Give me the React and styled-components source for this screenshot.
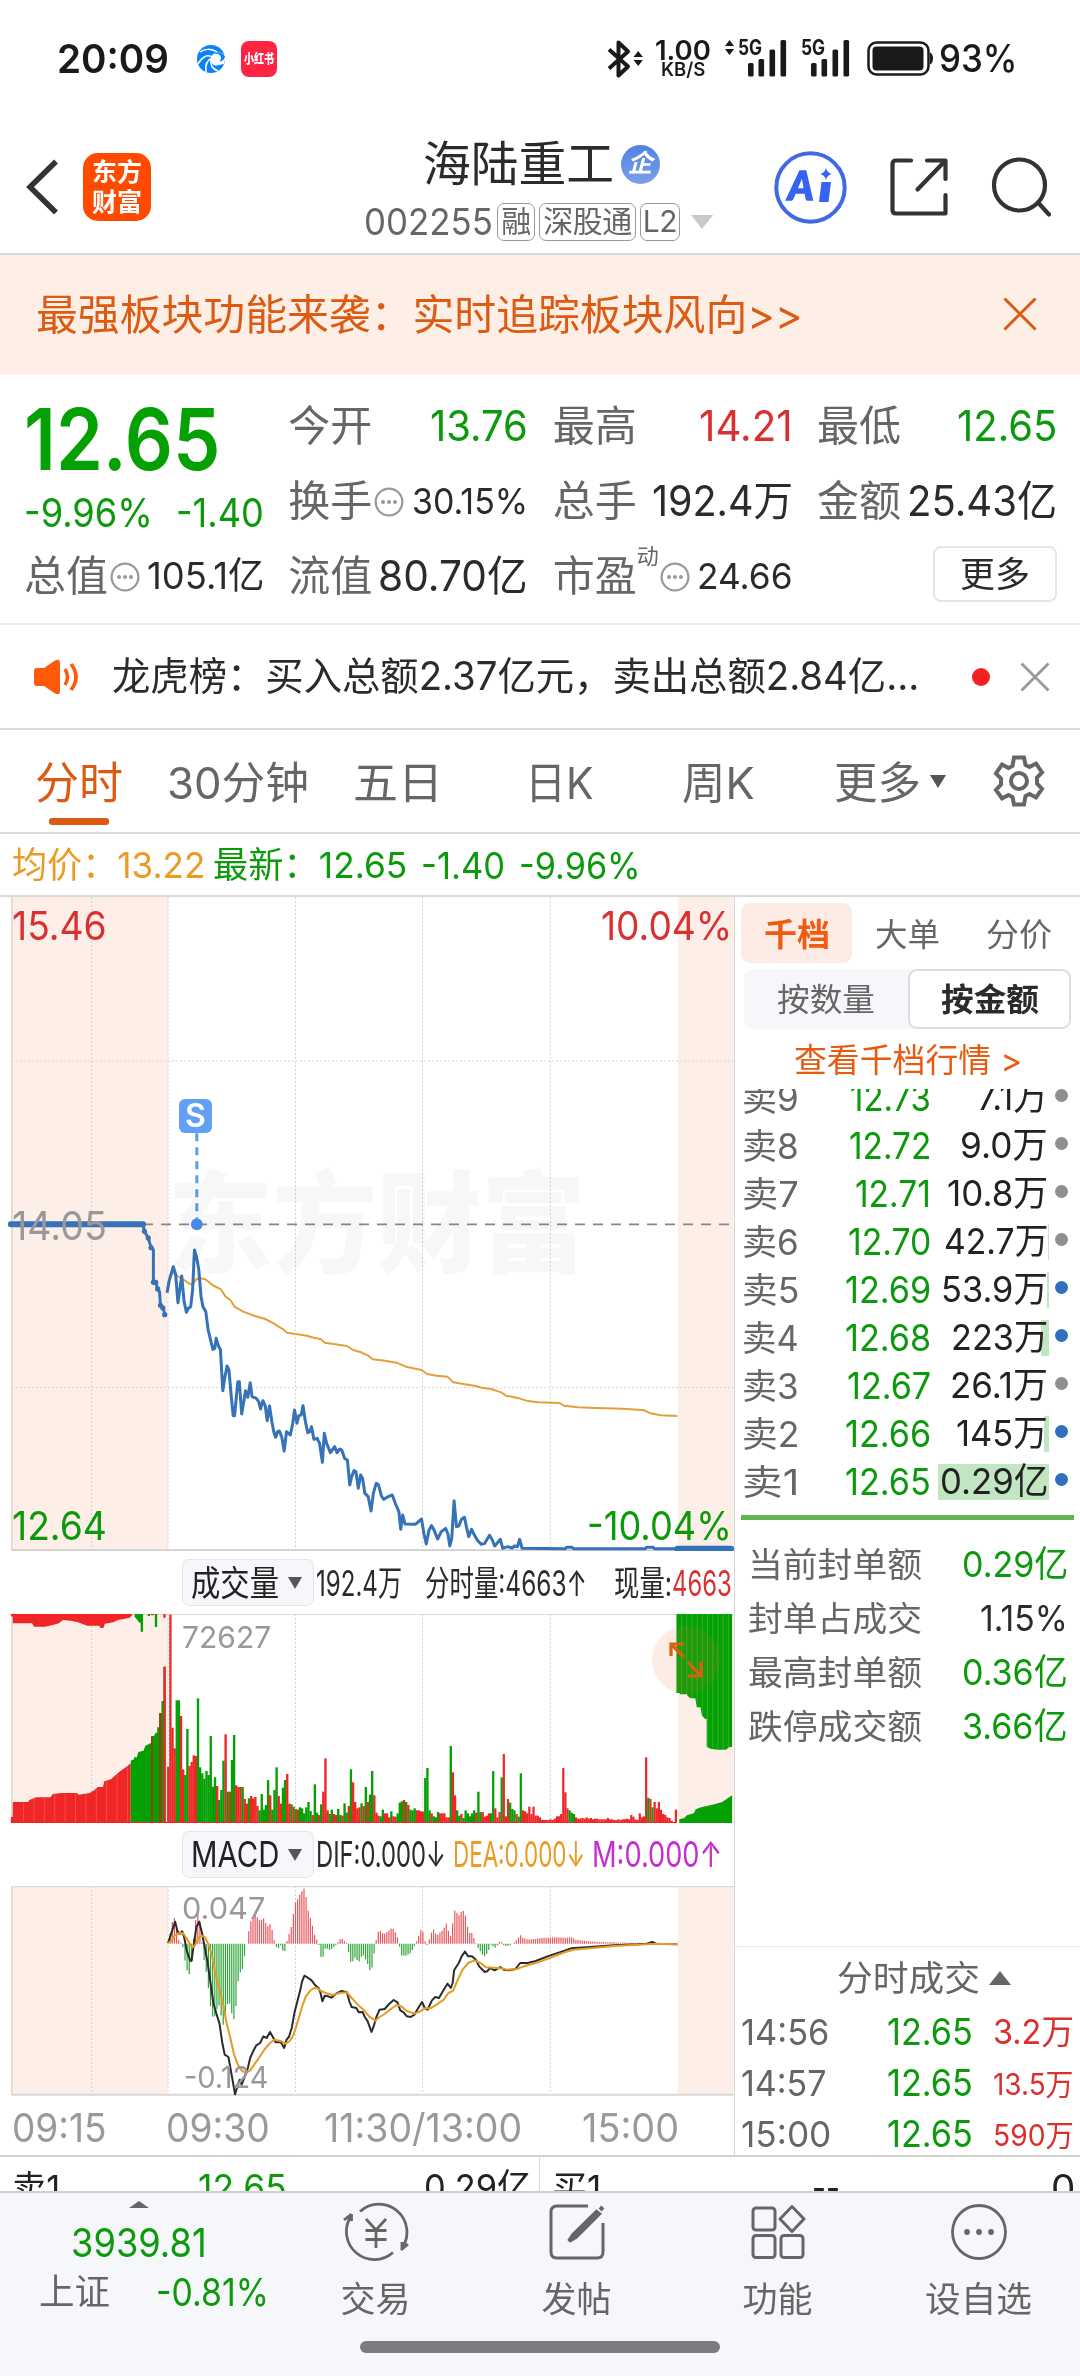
import React, { useLayoutEffect, useRef, useState } from 'react'
import styled, { createGlobalStyle } from 'styled-components';

const GREEN = '#0c990c'
const RED = '#d93030'
const ORANGE = '#dd5a12'
const GRAY = '#666'
const DARK = '#2b2b2b'
const BAR_RED = '#f02525'
const BAR_GREEN = '#04a004'

// text squeezed or stretched to the width of its cell
const FitText = ({ w, size, color, weight, children }) => {
    const ref = useRef(null)
    const [scale, setScale] = useState(1)

    useLayoutEffect(() => {
        setScale(w / ref.current.offsetWidth)
    }, [w, children])

    return (
        <FitBox $w={w} $size={size} $color={color} $weight={weight}>
            <FitInner ref={ref} style={{ transform: `scaleX(${scale})` }}>{children}</FitInner>
        </FitBox>
    )
}

const heads = [
    { label: '今开', value: '13.76', w: 98, color: GREEN },
    { label: '最高', value: '14.21', w: 94, color: RED },
    { label: '最低', value: '12.65', w: 100, color: GREEN },
    { label: '换手', value: '30.15%', w: 116, tip: true, small: true },
    { label: '总手', value: '192.4万', w: 141 },
    { label: '金额', value: '25.43亿', w: 150 },
]

const tabs = [
    { name: '分时', w: 88, left: 35, active: true },
    { name: '30分钟', w: 142, left: 44 },
    { name: '五日', w: 90, left: 44 },
    { name: '日K', w: 69, left: 82 },
    { name: '周K', w: 73, left: 88 },
    { name: '更多', w: 87, left: 79 },
]

const asks = [
    { name: '卖9', price: '12.73', pw: 81, amount: '7.1万', aw: 71, dot: '#8e8e93' },
    { name: '卖8', price: '12.72', pw: 82, amount: '9.0万', aw: 88, dot: '#8e8e93' },
    { name: '卖7', price: '12.71', pw: 76, amount: '10.8万', aw: 101, dot: '#8e8e93' },
    { name: '卖6', price: '12.70', pw: 83, amount: '42.7万', aw: 104, dot: '#8e8e93', bar: 1 },
    { name: '卖5', price: '12.69', pw: 86, amount: '53.9万', aw: 107, dot: '#2f6fbe', bar: 2 },
    { name: '卖4', price: '12.68', pw: 86, amount: '223万', aw: 97, dot: '#2f6fbe', bar: 8 },
    { name: '卖3', price: '12.67', pw: 84, amount: '26.1万', aw: 98, dot: '#8e8e93' },
    { name: '卖2', price: '12.66', pw: 86, amount: '145万', aw: 92, dot: '#2f6fbe', bar: 5 },
    { name: '卖1', price: '12.65', pw: 86, amount: '0.29亿', aw: 108, dot: '#2f6fbe', bar: 111 },
]

const stats = [
    { label: '当前封单额', value: '0.29亿', w: 106, color: GREEN },
    { label: '封单占成交', value: '1.15%', w: 88, color: DARK },
    { label: '最高封单额', value: '0.36亿', w: 106, color: GREEN },
    { label: '跌停成交额', value: '3.66亿', w: 106, color: GREEN },
]

const deals = [
    { time: '14:56', tw: 88, amount: '3.2万', size: 34 },
    { time: '14:57', tw: 86, amount: '13.5万', size: 30 },
    { time: '15:00', tw: 90, amount: '590万', size: 30 },
]

const gridX = [194, 356, 626, 895, 1166]

const prePrice = '303,223 306,244 314,264 320,292 325,300 325,397 330,397 334,417 338,425 340,466 346,474 349,494'
const preDots = [[306, 244], [314, 264], [320, 293], [325, 397], [330, 397], [334, 417], [340, 466], [345, 474], [349, 494]]
const price = '354,428 358,395 367,350 372,372 377,458 385,378 390,455 395,487 399,475 404,470 408,420 412,300 417,325 421,358 426,440 430,470 436,485 441,540 451,598 455,595 458,565 462,585 467,600 472,722 476,685 481,648 485,660 490,740 494,797 497,797 501,735 504,695 507,695 512,792 517,750 520,722 525,742 530,698 534,740 543,745 548,755 552,777 557,752 562,768 566,812 571,768 576,815 580,845 584,862 588,845 592,843 597,862 602,903 607,845 615,855 620,822 624,780 629,820 633,797 638,795 642,767 647,815 652,848 656,845 660,830 665,868 672,865 677,880 683,937 687,850 692,880 700,908 709,890 714,908 720,897 724,900 730,925 736,930 741,1005 745,980 750,962 754,965 759,1015 764,975 768,985 773,1030 780,1040 786,1083 791,1030 797,1000 802,1005 808,1038 813,1048 822,1040 831,1035 838,1062 845,1085 849,1138 853,1095 858,1122 880,1123 893,1107 898,1150 903,1182 909,1140 914,1127 919,1138 927,1167 935,1145 944,1135 949,1152 953,1188 957,1165 962,1052 967,1130 972,1128 978,1107 984,1102 988,1130 993,1160 999,1138 1005,1155 1012,1172 1020,1183 1027,1180 1037,1156 1043,1170 1048,1188 1054,1178 1060,1168 1065,1195 1075,1190 1085,1194 1090,1188 1096,1190 1101,1168 1106,1195 1198,1196 1200,1192 1212,1192 1215,1196 1367,1196 1370,1192 1384,1192 1386,1196 1435,1196'
const average = '354,420 360,378 368,366 376,378 390,390 400,400 408,405 414,390 422,384 435,388 450,405 468,418 478,440 488,450 497,470 515,485 540,498 562,507 580,520 590,530 600,538 608,548 630,553 650,557 665,563 680,568 688,578 710,583 735,588 748,600 765,607 780,617 790,628 815,632 840,638 860,650 893,660 905,672 925,677 948,680 960,697 985,703 1005,707 1020,713 1040,717 1062,727 1072,737 1100,745 1115,752 1140,757 1185,759 1195,767 1225,772 1260,774 1320,776 1365,781 1378,790 1400,796 1435,798'

// one entry per minute: top of the bar and r / g
const volume = '680r 224r 563r 625r 481g 481g 528r 688r 705g 567g 678r 666r 646r 648r 475g 682g 700g 716g 693g 705g 588g 740g 712g 738r 780g 750g 662g 583r 755g 755r 660g 585g 736r 741r 741r 741g 777r 791r 775g 768r 775r 771r 798r 811g 762g 809g 795g 720g 766r 809g 750g 682g 768r 791r 743g 720g 702r 791r 793g 800r 807g 809r 802g 805g 820g 802g 786g 813g 825r 733g 818g 825r 793g 755r 655r 811r 822g 809g 822r 825r 807g 825g 827r 790g 818g 798r 688g 727r 786r 805r 802r 790g 798r 741g 786r 764g 693g 766r 818r 827r 829g 809g 820r 820r 832r 814g 829r 830r 820g 788g 784g 780r 786g 795r 809g 811g 805g 811r 811r 814r 815r 714g 684g 811g 820r 829g 832g 816g 820r 820r 820r 832r 832r 618g 697r 766r 811g 827g 822r 834g 811g 820g 829g 820g 811g 818r 755g 816g 816r 830r 827r 820r 820g 693g 805r 832r 816r 712g 642r 829r 777r 788g 807g 811g 822r 830g 700g 811r 814r 820r 800r 822r 800r 827r 827r 832r 840r 840r 840r 840r 838r 840r 836r 829r 829r 822r 684r 757r 805r 811g 818g 822g 832r 836r 836r 834r 836r 832r 836r 834r 838r 836r 836r 838r 838r 838r 838r 834r 838r 838r 840r 840r 838r 840r 838r 838r 836r 838r 825r 830r 838r 840r 820r 832r 829r 652r 773g 777r 802g 786r 805r 786r 809r 822r 825r 832r 834r 842r 849r 809r'
    .split(' ')
    .map((s, i) => ({ x: 354 + i * 4.5, y: parseInt(s, 10), up: s.endsWith('r') }))
    .map((b) => ({ ...b, x: b.x > 1434 ? 1434 : b.x }))

// [x, y] key points of the MACD histogram around its zero line at 372
const histKeys = [[356, 372], [360, 345], [367, 292], [372, 298], [376, 350], [381, 372], [385, 365], [390, 400], [394, 445], [399, 460], [403, 468], [408, 385], [412, 330], [417, 272], [421, 280], [426, 330], [430, 405], [435, 437], [440, 485], [444, 540], [448, 580], [453, 602], [457, 578], [462, 560], [466, 555], [471, 620], [475, 610], [480, 567], [484, 540], [489, 563], [493, 598], [498, 600], [502, 518], [507, 452], [511, 465], [516, 432], [520, 385], [525, 360], [529, 310], [534, 300], [540, 285], [547, 296], [552, 307], [556, 293], [561, 300], [566, 325], [570, 310], [575, 320], [579, 350], [584, 380], [590, 385], [595, 376], [602, 405], [606, 375], [611, 348], [615, 335], [620, 303], [624, 250], [629, 245], [633, 228], [638, 222], [642, 202], [647, 215], [651, 260], [656, 292], [660, 300], [664, 336], [669, 355], [674, 368], [678, 390], [682, 432], [687, 390], [691, 385], [700, 392], [705, 385], [714, 373], [718, 363], [723, 355], [730, 365], [736, 372], [741, 422], [745, 430], [754, 410], [759, 432], [768, 403], [777, 425], [786, 462], [790, 425], [795, 378], [799, 345], [804, 327], [808, 340], [815, 342], [822, 335], [831, 323], [836, 335], [840, 345], [845, 365], [849, 407], [860, 408], [870, 400], [876, 384], [885, 358], [889, 340], [894, 323], [898, 350], [903, 380], [907, 372], [912, 345], [918, 328], [925, 348], [930, 342], [939, 330], [946, 310], [952, 345], [957, 352], [961, 270], [966, 275], [972, 288], [978, 275], [984, 273], [988, 303], [993, 340], [1000, 340], [1006, 362], [1011, 380], [1020, 400], [1025, 412], [1033, 400], [1040, 375], [1050, 385], [1058, 366], [1063, 368], [1069, 380], [1080, 377], [1090, 368], [1096, 360], [1102, 345], [1108, 355], [1120, 360], [1150, 355], [1180, 353], [1200, 355], [1209, 352], [1220, 360], [1240, 364], [1270, 367], [1300, 368], [1330, 369], [1436, 371]]

const histogram = Array.from({ length: 240 }, (_, i) => {
    const x = 356 + i * 4.5
    const n = histKeys.findIndex((k) => k[0] > x)
    const a = histKeys[n - 1]
    const b = histKeys[n]
    return { x, y: a[1] + ((b[1] - a[1]) * (x - a[0])) / (b[0] - a[0]) }
})

const dif = '356,370 362,345 371,306 376,335 381,342 386,335 390,352 396,395 403,423 406,423 410,380 416,322 422,306 428,340 434,385 440,430 446,490 452,550 458,580 465,612 471,670 476,705 484,712 490,760 498,824 504,795 508,780 512,795 520,765 525,745 530,715 537,693 543,677 551,670 558,650 565,655 572,637 578,652 584,668 595,668 602,685 607,660 612,652 618,625 624,578 630,545 636,512 640,485 645,468 650,472 660,482 668,497 675,505 679,520 683,545 688,528 695,530 702,534 712,522 724,514 735,518 740,545 745,562 755,565 760,578 768,577 773,592 779,605 787,637 792,618 798,590 804,570 815,568 825,552 834,541 842,548 848,572 855,578 862,590 870,592 878,585 886,565 894,547 900,565 906,570 915,542 922,532 930,535 940,510 948,492 955,505 959,490 962,452 972,430 978,410 985,396 992,410 1000,410 1008,420 1015,440 1027,457 1032,455 1038,445 1048,452 1060,442 1068,451 1080,452 1092,448 1102,430 1118,430 1135,424 1160,410 1185,398 1210,386 1250,382 1300,377 1350,374 1370,372 1382,367 1390,372 1435,374'
const dea = '356,370 362,365 370,348 380,340 388,341 395,355 402,373 408,383 414,375 420,355 426,348 434,352 442,375 450,412 456,460 464,502 472,550 480,610 488,655 496,705 504,735 512,752 520,760 530,752 540,732 550,712 560,690 572,670 582,660 595,664 605,672 614,664 622,645 632,600 640,560 648,530 656,515 664,506 672,505 680,514 690,520 705,526 720,520 735,518 745,535 758,555 770,570 782,590 795,603 804,592 815,583 828,568 840,556 850,560 862,574 878,582 890,575 900,566 912,566 925,555 940,540 950,520 960,513 970,480 980,450 992,430 1005,422 1018,430 1030,443 1045,444 1060,446 1075,450 1095,448 1110,440 1140,428 1170,412 1200,396 1215,390 1250,386 1300,379 1350,375 1390,372 1435,374'

const PlotFrame = ({ top, height }) => (
    <>
        <rect x="25" y={top} width="331" height={height} fill="#fdeee8" />
        <rect x="1436" y={top} width="118" height={height} fill="#fdeee8" />
        {gridX.map((x) => (
            <line key={x} x1={x} x2={x} y1={top} y2={top + height} stroke="#d2d2d2" strokeDasharray="2 2" />
        ))}
        <path d={`M25 ${top}V${top + height}`} stroke="#d8d8d8" strokeWidth="1.5" />
    </>
)

const Tip = () => (
    <TipIcon width="30" height="30" viewBox="0 0 30 30" fill="#999">
        <circle cx="15" cy="15" r="13.4" fill="none" stroke="#999" strokeWidth="2.2" />
        <circle cx="9" cy="15" r="2" />
        <circle cx="15" cy="15" r="2" />
        <circle cx="21" cy="15" r="2" />
    </TipIcon>
)

const Signal = ({ arrows }) => (
    <SignalWrap $arrows={arrows}>
        <svg width="64" height="40" viewBox="0 0 64 40" fill="#1a1a1a">
            {arrows && <path d="M1 7l4.500-6 4.500 6zM1 10h9l-4.500 6z" />}
            <rect x="24" y="24" width="5.600" height="13.500" rx="1.500" />
            <rect x="34.500" y="20" width="5.600" height="17.500" rx="1.500" />
            <rect x="45.500" y="10.500" width="5.600" height="27" rx="1.500" />
            <rect x="56.500" y="1" width="5.600" height="36.500" rx="1.500" />
        </svg>
        <SignalName><FitText w={24} size={21} weight={700}>5G</FitText></SignalName>
    </SignalWrap>
)

const StatusBar = () => (
    <Status>
        <FitText w={112} size={40} weight={600} color="#1a1a1a">20:09</FitText>
        <AppIcons>
            <svg width="28" height="28" viewBox="0 0 28 28">
                <circle cx="14" cy="14" r="14" fill="#0a84f5" />
                <path d="M28 10C23 5 15 7 14 13c-1 6 4 9 8 7l5-1 2-9z" fill="#fff" />
                <path d="M15 12C10 9 5 12 1 19M15 13c-5 2-7 7-6 14M14 14c-1 6 1 10 7 12M20 7C14 3 7 4 3 7" fill="none" stroke="#fff" strokeWidth="1.500" />
                <path d="M17 9c3-1 6 0 7 3 0 3-1 4-2 4 3 1 5-1 6-4-1-4-7-6-11-3z" fill="#0a84f5" />
            </svg>
            <RedApp><FitText w={30} size={13} weight={900} color="#fff">小红书</FitText></RedApp>
        </AppIcons>
        <StatusRight>
            <svg width="38" height="40" viewBox="0 0 38 40">
                <path d="M3 10l19 17-9.500 9V3l9.500 9L3 29" transform="translate(0 .5)" fill="none" stroke="#1a1a1a" strokeWidth="4" strokeLinejoin="round" />
                <path d="M27.500 18l4.700-6 4.700 6zM27.500 21h9.400l-4.700 6z" fill="#1a1a1a" />
            </svg>
            <Speed>
                <FitText w={56} size={27} weight={600}>1.00</FitText>
                <FitText w={44} size={19} weight={600}>KB/S</FitText>
            </Speed>
            <Signal arrows />
            <Signal />
            <Battery width="68" height="36" viewBox="0 0 68 36">
                <rect x="1.500" y="1.500" width="60" height="32" rx="8" fill="none" stroke="#1a1a1a" strokeWidth="2.500" />
                <rect x="5.500" y="5.500" width="51" height="24" rx="4" fill="#1a1a1a" />
                <path d="M63 11.500c4 1 4 11 0 12z" fill="#1a1a1a" />
            </Battery>
            <FitText w={79} size={38} weight={500}>93%</FitText>
        </StatusRight>
    </Status>
)

const Header = () => (
    <HeaderWrap>
        <HeaderSide>
            <svg width="34" height="58" viewBox="0 0 34 58">
                <path d="M30 3.500L4 29l26 25.500" fill="none" stroke="#333" strokeWidth="5.500" />
            </svg>
            <Logo>
                <FitText w={50} size={25} weight={700} color="#fff">东方</FitText>
                <FitText w={50} size={25} weight={700} color="#fff">财富</FitText>
            </Logo>
        </HeaderSide>
        <TitleBlock>
            <TitleRow>
                <FitText w={191} size={48} color={DARK}>海陆重工</FitText>
                <Company>企</Company>
            </TitleRow>
            <CodeRow>
                <FitText w={129} size={37} color={GRAY}>002255</FitText>
                <Tag $w={38}>融</Tag>
                <Tag $w={97}>深股通</Tag>
                <Tag $w={40}>L2</Tag>
                <CodeArrow />
            </CodeRow>
        </TitleBlock>
        <HeaderSide $end>
            <svg width="73" height="73" viewBox="0 0 73 73" fill="#3763f4">
                <circle cx="36.500" cy="36.500" r="34.200" fill="none" stroke="#4169e1" strokeWidth="4" />
                <text x="14" y="49" fontFamily="Lato, sans-serif" fontSize="39" fontWeight="900" fontStyle="italic" stroke="#3763f4" strokeWidth="1.500">A</text>
                <path d="M47.500 31h9.500l-2.500 20h-9.500z" strokeLinejoin="round" />
                <path d="M52 17q1.200 4.800 6 6-4.800 1.200-6 6-1.200-4.800-6-6 4.800-1.200 6-6z" />
            </svg>
            <svg width="58" height="58" viewBox="0 0 58 58" fill="none" stroke="#333" strokeWidth="4.200" strokeLinecap="round" strokeLinejoin="round">
                <path d="M21 2.500H6Q2.500 2.500 2.500 6v46q0 3.500 3.500 3.500h49.500V37M37 2.500h18.500V21M55 3L27.500 31.500" />
            </svg>
            <svg width="60" height="60" viewBox="0 0 60 60" fill="none" stroke="#333" strokeWidth="4.200" strokeLinecap="round">
                <circle cx="28.500" cy="28" r="25.500" />
                <path d="M47 45.500l11 12" />
            </svg>
        </HeaderSide>
    </HeaderWrap>
)

const Quote = () => (
    <QuoteGrid>
        <PriceBlock>
            <FitText w={196} size={85} weight={600} color="#04a004">12.65</FitText>
            <Spread>
                <FitText w={129} size={39} color={GREEN}>-9.96%</FitText>
                <FitText w={88} size={39} color={GREEN}>-1.40</FitText>
            </Spread>
        </PriceBlock>
        {heads.map((h) => (
            <QuoteCell key={h.label}>
                <FitText w={84} size={42} color={GRAY}>{h.label}</FitText>
                {h.tip && <Tip />}
                <Grow />
                <FitText w={h.w} size={h.small ? 36 : 42} color={h.color || DARK}>{h.value}</FitText>
            </QuoteCell>
        ))}
        <QuoteCell>
            <FitText w={84} size={42} color={GRAY}>总值</FitText>
            <Tip />
            <Grow />
            <FitText w={117} size={37} color={DARK}>105.1亿</FitText>
        </QuoteCell>
        <QuoteCell>
            <FitText w={84} size={42} color={GRAY}>流值</FitText>
            <Grow />
            <FitText w={150} size={42} color={DARK}>80.70亿</FitText>
        </QuoteCell>
        <QuoteCell>
            <FitText w={84} size={42} color={GRAY}>市盈</FitText>
            <Super>动</Super>
            <Tip />
            <Grow />
            <FitText w={96} size={36} color={DARK}>24.66</FitText>
        </QuoteCell>
        <QuoteCell $end>
            <MoreButton><FitText w={70} size={35} color={DARK}>更多</FitText></MoreButton>
        </QuoteCell>
    </QuoteGrid>
)

const PriceChart = () => (
    <Panel>
        <Watermark><FitText w={418} size={110} weight={900} color="#f7f7f7">东方财富</FitText></Watermark>
        <Plot $h={654} viewBox="0 -759 1555 1962" preserveAspectRatio="none">
            <PlotFrame top={-759} height={1960} />
            <path d="M25 -267H1554M25 713H1554" stroke="#d2d2d2" strokeDasharray="2 2" />
            <path d="M25 1201H1554" stroke="#cfcfcf" strokeWidth="2" />
            <path d="M303 223H1554" stroke="#888" strokeWidth="1.600" strokeDasharray="10 8" />
            <polyline points={average} stroke="#e3a03a" strokeWidth="2" />
            <polyline points={prePrice} stroke="#3572b8" strokeWidth="3" />
            {preDots.map(([x, y]) => (
                <ellipse key={x} cx={x} cy={y} rx="5.500" ry="8" fill="#3572b8" />
            ))}
            <polyline points={price} stroke="#3572b8" strokeWidth="3" />
            <path d="M23 223H303M1435 1196H1549" stroke="#3572b8" strokeWidth="6" strokeLinecap="round" />
            <path d="M417 -50V205" stroke="#5c9ded" strokeWidth="3" strokeDasharray="8 6" />
            <ellipse cx="417" cy="223" rx="12.500" ry="18" fill="#4a90ee" />
        </Plot>
        <SellMark>S</SellMark>
        <Label $x={12} $y={5}><FitText w={95} size={40} color={RED}>15.46</FitText></Label>
        <Label $x={601} $y={5}><FitText w={131} size={40} color={RED}>10.04%</FitText></Label>
        <Label $x={12} $y={305}><FitText w={95} size={40} color="#999">14.05</FitText></Label>
        <Label $x={12} $y={605}><FitText w={95} size={40} color={GREEN}>12.64</FitText></Label>
        <Label $x={587} $y={605}><FitText w={145} size={40} color={GREEN}>-10.04%</FitText></Label>
    </Panel>
)

const VolumeChart = () => (
    <Panel>
        <Plot $h={209} viewBox="0 222 1555 627" preserveAspectRatio="none">
            <PlotFrame top={222} height={627} />
            <path d="M25 223H1554" stroke="#d8d8d8" strokeWidth="1.500" />
            <path d="M23 222V228L27 230V250H68L72 260H95L110 256 125 250 133 240 150 242 165 247 185 257H210L213 264H219L222 251 240 247 250 240 262 237 275 233 280 226V222z" fill={BAR_RED} />
            <path d="M285 222V230L290 238 295 248H298V275H303V222zM313 222V228H318V222zM328 222V261H333V222z" fill={BAR_GREEN} />
            <path d="M320 222V226H326V222zM346 222V233H351V222z" fill={BAR_RED} />
            <path d="M23 849V831H27V786H60L62 780 77 772H107L112 762 130 759H163L167 764 190 759 200 750 207 741H218L221 724 235 718 245 705 255 693 265 683 277 670V849z" fill={BAR_RED} />
            <path d="M277 849V662L284 658V652H290L293 636 304 632 308 617 320 609V588H326L330 578H333V562H338V520H342V483H347V849z" fill={BAR_GREEN} />
            <path d="M320 849V590H324V849zM337 849V520H342V849zM346 849V380H351V849z" fill="#a03a10" />
            <path d="M347 849V380H351V849z" fill={BAR_RED} />
            {volume.map((b, i) => (
                <rect key={i} x={b.x} y={b.y} width={i > 150 ? 4.7 : 5} height={849 - b.y} fill={b.up ? BAR_RED : BAR_GREEN} />
            ))}
            <path d="M1433 222V459H1440V463H1456V467L1463 475H1473L1476 502H1484L1487 526 1493 536H1497V620L1505 626 1520 629H1538L1545 621H1551V222z" fill={BAR_GREEN} />
            <path d="M1439 849V838L1450 834 1455 826 1470 820 1474 808 1485 802 1500 797 1515 792 1530 786 1540 776 1551 766V849z" fill={BAR_GREEN} />
            <path d="M1444 222V460M1455 222V464M1466 222V474M1477 222V500M1488 222V526M1499 222V620M1510 222V626M1521 222V628M1532 222V628M1543 222V621M50 786V849M72 776V849M94 772V849M116 762V849M138 760V849M160 760V849M182 762V849M204 745V849M226 722V849M248 700V849M270 678V849" stroke="#fff" strokeOpacity=".18" strokeWidth="1" />
            <path d="M23 848H1433" stroke={BAR_RED} strokeWidth="1.500" />
        </Plot>
        <Label $x={182} $y={5}><FitText w={89} size={30} color="#999">72627</FitText></Label>
        <Expand>
            <svg width="36" height="48" viewBox="0 0 36 48" fill="none" stroke="#d9600c" strokeWidth="3.200">
                <path d="M3 20V8h13M4 9l12 12M20 26l12 13M33 26v14H20" />
            </svg>
        </Expand>
    </Panel>
)

const MacdChart = () => (
    <Panel>
        <Plot $h={210} viewBox="0 199 1555 630" preserveAspectRatio="none">
            <PlotFrame top={199} height={627} />
            <path d="M25 200H1554M25 825H1554" stroke="#d8d8d8" strokeWidth="2" />
            {histogram.map((b) => (
                <line key={b.x} x1={b.x} x2={b.x} y1="372" y2={b.y} stroke={b.y < 372 ? '#e8565c' : '#2fa638'} strokeWidth="1.200" />
            ))}
            <polyline points={dif} stroke="#2b2b2b" strokeWidth="2" />
            <polyline points={dea} stroke="#e59a24" strokeWidth="2" />
        </Plot>
        <Label $x={182} $y={4}><FitText w={83} size={30} color="#999">0.047</FitText></Label>
        <Label $x={184} $y={173}><FitText w={84} size={30} color="#999">-0.124</FitText></Label>
    </Panel>
)

const Depth = () => (
    <DepthWrap>
        <DepthTabs>
            <DepthTab $active><FitText w={66} size={32} weight={700} color="#f25a0e">千档</FitText></DepthTab>
            <DepthTab><FitText w={65} size={32} color={GRAY}>大单</FitText></DepthTab>
            <DepthTab><FitText w={66} size={32} color={GRAY}>分价</FitText></DepthTab>
        </DepthTabs>
        <Segment>
            <SegmentItem><FitText w={98} size={32} color={GRAY}>按数量</FitText></SegmentItem>
            <SegmentItem $active><FitText w={98} size={32} weight={700} color={DARK}>按金额</FitText></SegmentItem>
        </Segment>
        <DepthLink><FitText w={228} size={33} color="#e85a10">查看千档行情 &gt;</FitText></DepthLink>
        <AskList>
            {asks.map((a) => (
                <AskRow key={a.name}>
                    <FitText w={57} size={35} color={GRAY}>{a.name}</FitText>
                    <AskPrice><FitText w={a.pw} size={37} color={GREEN}>{a.price}</FitText></AskPrice>
                    <AskAmount>
                        {a.bar && <AskBar $w={a.bar} />}
                        <FitText w={a.aw} size={36} color="#222">{a.amount}</FitText>
                    </AskAmount>
                    <AskDot $color={a.dot} />
                </AskRow>
            ))}
        </AskList>
        <GreenBar />
        <StatList>
            {stats.map((s) => (
                <StatRow key={s.label}>
                    <FitText w={174} size={34} color={GRAY}>{s.label}</FitText>
                    <FitText w={s.w} size={36} color={s.color}>{s.value}</FitText>
                </StatRow>
            ))}
        </StatList>
        <DealList>
            <DealTitle>
                <FitText w={143} size={35} color={GRAY}>分时成交</FitText>
                <UpArrow $w={11} $h={14} />
            </DealTitle>
            {deals.map((d) => (
                <DealRow key={d.time}>
                    <FitText w={d.tw} size={36} color={GRAY}>{d.time}</FitText>
                    <AskPrice><FitText w={86} size={37} color={GREEN}>12.65</FitText></AskPrice>
                    <DealAmount><FitText w={81} size={d.size} color={RED}>{d.amount}</FitText></DealAmount>
                </DealRow>
            ))}
        </DealList>
    </DepthWrap>
)

const BottomBar = () => (
    <Bottom>
        <Index>
            <UpArrow $w={10} $h={7} />
            <FitText w={136} size={40} color={GREEN}>3939.81</FitText>
            <IndexRow>
                <FitText w={71} size={36} color={GRAY}>上证</FitText>
                <FitText w={113} size={38} color={GREEN}>-0.81%</FitText>
            </IndexRow>
        </Index>
        <NavItem>
            <svg width="66" height="60" viewBox="0 0 66 60" fill="none" stroke="#666" strokeWidth="2.800">
                <path d="M17 9.500A28 28 0 0 1 59 46M58 48l7-6M59 48v-8M50 50.500A28 28 0 0 1 7.500 15M8.500 12L1 18M8.500 12v7" />
                <path d="M23 17l10 11 10-11M33 28v18M22.500 28.500h21M22.500 37.500h21" />
            </svg>
            <FitText w={70} size={35} color={GRAY}>交易</FitText>
        </NavItem>
        <NavItem>
            <svg width="58" height="60" viewBox="0 0 58 60" fill="none" stroke="#666" strokeWidth="3">
                <path d="M40 4H9Q3 4 3 10v40q0 6 6 6h40q6 0 6-6V21" />
                <path d="M52 5l3 3M48.500 10L25 33l-4 6 7-4L51 12z" strokeWidth="4" />
            </svg>
            <FitText w={70} size={35} color={GRAY}>发帖</FitText>
        </NavItem>
        <NavItem>
            <svg width="56" height="60" viewBox="0 0 56 60" fill="none" stroke="#666" strokeWidth="3" strokeLinejoin="round">
                <rect x="3" y="6" width="22" height="22" rx="3" />
                <rect x="3" y="33.500" width="22" height="22" rx="3" />
                <rect x="31" y="33.500" width="22" height="22" rx="3" />
                <path d="M42 4.500L54 17 42 29.500 30 17z" />
            </svg>
            <FitText w={70} size={35} color={GRAY}>功能</FitText>
        </NavItem>
        <NavItem>
            <svg width="58" height="60" viewBox="0 0 58 60" fill="#666">
                <circle cx="29" cy="30" r="26.500" fill="none" stroke="#666" strokeWidth="2.800" />
                <circle cx="17" cy="30" r="2.900" />
                <circle cx="29" cy="30" r="2.900" />
                <circle cx="41" cy="30" r="2.900" />
            </svg>
            <FitText w={107} size={35} color={GRAY}>设自选</FitText>
        </NavItem>
    </Bottom>
)

const App = () => {
    return (
        <Screen>
            <GlobalStyle />
            <StatusBar />
            <Header />
            <Banner>
                <FitText w={767} size={42} color={ORANGE}>最强板块功能来袭：实时追踪板块风向&gt;&gt;</FitText>
                <svg width="34" height="34" viewBox="0 0 34 34" stroke={ORANGE} strokeWidth="3">
                    <path d="M1.500 .5l31 31M32.500 .5l-31 31" />
                </svg>
            </Banner>
            <Quote />
            <Notice>
                <svg width="46" height="38" viewBox="0 0 46 38" fill="#ff5a0a">
                    <path d="M3 10h7L21 2.500Q26 0 26 5v28q0 5-5 2.500L10 28H3q-3 0-3-3V13q0-3 3-3z" />
                    <path d="M31 11q5 8 0 16M37 6q10 13 0 26" fill="none" stroke="#ff5a0a" strokeWidth="3.600" />
                </svg>
                <FitText w={807} size={39} color={DARK}>龙虎榜：买入总额2.37亿元，卖出总额2.84亿...</FitText>
                <NoticeDot />
                <svg width="30" height="30" viewBox="0 0 30 30" stroke="#999" strokeWidth="2.800">
                    <path d="M1.500 1.500l27 27M28.500 1.500l-27 27" />
                </svg>
            </Notice>
            <Tabs>
                {tabs.map((t) => (
                    <Tab key={t.name} $left={t.left} $active={t.active}>
                        <FitText w={t.w} size={44} color={t.active ? ORANGE : GRAY}>{t.name}</FitText>
                    </Tab>
                ))}
                <DownArrow $w={8} $h={13} />
                <Gear width="54" height="54" viewBox="0 0 54 54" fill="none" stroke="#666" strokeWidth="4">
                    <path d="M22 3.500h10l1.500 7.500 4 2 6.500-3.500 6 9-5 5v6l5 5.500-6 8.500-6.500-3.500-4 2L32 50.500H22L20.500 43l-4-2L10 44.500 4 36l5-5.500v-6l-5-5 6-9 6.500 3.500 4-2z" />
                    <circle cx="27" cy="27" r="8" />
                </Gear>
            </Tabs>
            <InfoLine>
                <FitText w={193} size={36} color="#eb9a23">均价：13.22</FitText>
                <FitText w={194} size={36} color={GREEN}>最新：12.65</FitText>
                <FitText w={84} size={37} color={GREEN}>-1.40</FitText>
                <FitText w={122} size={37} color={GREEN}>-9.96%</FitText>
            </InfoLine>
            <Main>
                <Charts>
                    <PriceChart />
                    <ChartBar>
                        <Picker><FitText w={88} size={35} color="#222">成交量</FitText><DownArrow $w={7.5} $h={12} /></Picker>
                        <FitText w={86} size={35} color={DARK}>192.4万</FitText>
                        <ChartValue $ml={23}><FitText w={162} size={35} color={DARK}>分时量:4663↑</FitText></ChartValue>
                        <ChartValue $ml={27}><FitText w={58} size={35} color={DARK}>现量:</FitText></ChartValue>
                        <FitText w={60} size={35} color={RED}>4663</FitText>
                    </ChartBar>
                    <VolumeChart />
                    <ChartBar>
                        <Picker><FitText w={88} size={36} color="#222">MACD</FitText><DownArrow $w={7.5} $h={12} /></Picker>
                        <FitText w={130} size={36} color={DARK}>DIF:0.000↓</FitText>
                        <ChartValue $ml={7}><FitText w={132} size={36} color="#eb9a23">DEA:0.000↓</FitText></ChartValue>
                        <ChartValue $ml={7}><FitText w={130} size={36} color="#c42fd0">M:0.000↑</FitText></ChartValue>
                    </ChartBar>
                    <MacdChart />
                    <Axis>
                        <FitText w={95} size={39} color="#999">09:15</FitText>
                        <FitText w={104} size={39} color="#999">09:30</FitText>
                        <FitText w={198} size={39} color="#999">11:30/13:00</FitText>
                        <FitText w={97} size={39} color="#999">15:00</FitText>
                    </Axis>
                </Charts>
                <Depth />
            </Main>
            <OrderStrip>
                <OrderHalf>
                    <FitText w={48} size={35} color="#222">卖1</FitText>
                    <FitText w={89} size={37} color={GREEN}>12.65</FitText>
                    <FitText w={107} size={36} color="#222">0.29亿</FitText>
                </OrderHalf>
                <OrderHalf>
                    <FitText w={49} size={35} color="#222">买1</FitText>
                    <FitText w={28} size={37} color="#222">--</FitText>
                    <FitText w={24} size={37} color="#222">0</FitText>
                </OrderHalf>
            </OrderStrip>
            <BottomBar />
            <HomeArea><HomePill /></HomeArea>
        </Screen>
    )
}

const GlobalStyle = createGlobalStyle`
    body {
        margin: 0;
        background: #fff;
    }

    * {
        box-sizing: border-box;
    }

    svg {
        display: block;
        flex: none;
    }
`

const Screen = styled.div`
    width: 1080px;
    height: 2376px;
    overflow: hidden;
    display: flex;
    flex-direction: column;
    background: #fff;
    font-family: Inter, "Noto Sans CJK SC", sans-serif;
    line-height: 1;
    color: #1a1a1a;

    > * {
        flex: none;
    }
`

const FitBox = styled.span`
    display: block;
    flex: none;
    width: ${p => p.$w}px;
    font-size: ${p => p.$size}px;
    font-weight: ${p => p.$weight || 400};
    color: ${p => p.$color || 'inherit'};
    line-height: 1.2;
    height: 1.2em;
`

const FitInner = styled.span`
    display: inline-block;
    white-space: nowrap;
    transform-origin: 0 50%;
    line-height: inherit;
    vertical-align: top;
`

const Grow = styled.span`
    flex: 1;
`

const TipIcon = styled.svg`
    margin-left: 2px;
`

const Status = styled.div`
    height: 110px;
    padding: 8px 62px 0 57px;
    display: flex;
    align-items: center;
`

const AppIcons = styled.div`
    display: flex;
    align-items: center;
    gap: 16px;
    margin-left: 28px;
`

const RedApp = styled.div`
    width: 36px;
    height: 36px;
    border-radius: 8px;
    background: #ff2442;
    display: flex;
    align-items: center;
    justify-content: center;
`

const StatusRight = styled.div`
    margin-left: auto;
    display: flex;
    align-items: center;
`

const Speed = styled.div`
    display: flex;
    flex-direction: column;
    align-items: center;
    margin: 0 13px 0 11px;

    > * {
        line-height: .86;
        height: .86em;
        margin: 0;
    }
`

const SignalWrap = styled.div`
    position: relative;
    margin-left: ${p => p.$arrows ? 0 : -1}px;
`

const SignalName = styled.div`
    position: absolute;
    left: 14px;
    top: -4px;
`

const Battery = styled.svg`
    margin: 0 4px 0 16px;
`

const HeaderWrap = styled.header`
    height: 145px;
    padding: 10px 29px 0 26px;
    border-bottom: 2px solid #d9d9d9;
    display: grid;
    grid-template-columns: 1fr auto 1fr;
`

const HeaderSide = styled.div`
    display: flex;
    align-items: center;
    justify-content: ${p => p.$end ? 'flex-end' : 'flex-start'};
    gap: ${p => p.$end ? 43 : 23}px;
    height: 134px;
`

const Logo = styled.div`
    width: 68px;
    height: 68px;
    border-radius: 15px;
    background: #ff4a00;
    display: flex;
    flex-direction: column;
    align-items: center;
    justify-content: center;
`

const TitleBlock = styled.div`
    display: flex;
    flex-direction: column;
    align-items: center;
    padding-top: 15px;
`

const TitleRow = styled.div`
    height: 58px;
    margin-left: 5px;
    display: flex;
    align-items: center;
    gap: 7px;
`

const Company = styled.span`
    width: 39px;
    height: 39px;
    border-radius: 50%;
    background: linear-gradient(#5380e2, #7ba0e8);
    color: #fff;
    font-size: 25px;
    font-weight: 700;
    font-style: italic;
    line-height: 37px;
    text-align: center;
`

const CodeRow = styled.div`
    height: 38px;
    margin-top: 10px;
    display: flex;
    align-items: center;
    gap: 4px;
`

const Tag = styled.span`
    width: ${p => p.$w}px;
    height: 38px;
    border: 1.500px solid #999;
    border-radius: 7px;
    color: ${GRAY};
    font-size: 30px;
    line-height: 35px;
    text-align: center;
    white-space: nowrap;
    letter-spacing: -.5px;
`

const CodeArrow = styled.span`
    border: 11px solid transparent;
    border-top: 14px solid #c9c9c9;
    border-bottom: 0;
    margin-left: 7px;
`

const Banner = styled.div`
    height: 120px;
    padding: 0 43px 0 36px;
    background: #fdeee6;
    display: flex;
    align-items: center;
    justify-content: space-between;
`

const QuoteGrid = styled.section`
    height: 250px;
    padding: 14px 25px 0 24px;
    border-bottom: 2px solid #ebebeb;
    display: grid;
    grid-template-columns: repeat(4, 238px);
    grid-auto-rows: 75px;
    justify-content: space-between;
`

const PriceBlock = styled.div`
    grid-row: span 2;
    display: flex;
    flex-direction: column;
`

const Spread = styled.div`
    display: flex;
    justify-content: space-between;
    margin: -1px -2px 0 0;
`

const QuoteCell = styled.div`
    margin-right: ${p => p.$end ? -2 : -2}px;
    display: flex;
    align-items: center;
    justify-content: ${p => p.$end ? 'flex-end' : 'flex-start'};
`

const Super = styled.span`
    font-size: 22px;
    color: ${GRAY};
    align-self: flex-start;
    margin-top: 6px;
    width: 21px;
`

const MoreButton = styled.button`
    width: 124px;
    height: 56px;
    padding: 0;
    border: 2px solid #e5e5e5;
    border-radius: 8px;
    background: #fff;
    font-family: inherit;
    display: flex;
    align-items: center;
    justify-content: center;
    margin-top: -5px;
`

const Notice = styled.div`
    height: 105px;
    padding: 0 30px 0 34px;
    border-bottom: 2px solid #d9d9d9;
    display: flex;
    align-items: center;

    > :nth-child(2) {
        margin-left: 32px;
    }
`

const NoticeDot = styled.span`
    width: 18px;
    height: 18px;
    border-radius: 50%;
    background: #f52222;
    margin-left: auto;
    margin-right: 30px;
`

const Tabs = styled.nav`
    height: 104px;
    border-bottom: 2px solid #d9d9d9;
    display: flex;
    align-items: center;
`

const Tab = styled.div`
    height: 100%;
    margin-left: ${p => p.$left}px;
    padding-top: 4px;
    display: flex;
    align-items: center;
    position: relative;

    ${p => p.$active && `
        &::after {
            content: '';
            position: absolute;
            left: 14px;
            bottom: 7px;
            width: 60px;
            height: 7px;
            border-radius: 3px;
            background: ${ORANGE};
        }
    `}
`

const DownArrow = styled.span`
    border: ${p => p.$w}px solid transparent;
    border-top: ${p => p.$h}px solid #555;
    border-bottom: 0;
    margin-left: 9px;
`

const UpArrow = styled.span`
    border: ${p => p.$w}px solid transparent;
    border-bottom: ${p => p.$h}px solid #666;
    border-top: 0;
`

const Gear = styled.svg`
    margin-left: auto;
    margin-right: 34px;
`

const InfoLine = styled.div`
    height: 63px;
    padding: 3px 0 0 12px;
    border-bottom: 2px solid #d9d9d9;
    display: flex;
    align-items: center;

    > :nth-child(2) {
        margin-left: 8px;
    }

    > :nth-child(3) {
        margin-left: 14px;
    }

    > :nth-child(4) {
        margin-left: 14px;
    }
`

const Main = styled.main`
    height: 1260px;
    border-bottom: 2px solid #d0d0d0;
    display: flex;
`

const Charts = styled.section`
    width: 734px;
`

const Panel = styled.div`
    position: relative;
`

const Plot = styled.svg`
    position: relative;
    width: 734px;
    height: ${p => p.$h}px;
    fill: none;
    stroke-linejoin: round;

    line, path, polyline {
        vector-effect: non-scaling-stroke;
    }
`

const Watermark = styled.div`
    position: absolute;
    left: 168px;
    top: 261px;
    z-index: 1;
    mix-blend-mode: multiply;
`

const Label = styled.div`
    position: absolute;
    left: ${p => p.$x}px;
    top: ${p => p.$y}px;
    z-index: 2;
`

const SellMark = styled.div`
    position: absolute;
    left: 179px;
    top: 202px;
    width: 33px;
    height: 34px;
    border-radius: 6px;
    background: #629ff6;
    color: #fff;
    font-size: 32px;
    font-weight: 600;
    line-height: 34px;
    text-align: center;
`

const ChartBar = styled.div`
    height: 63px;
    padding-left: 182px;
    display: flex;
    align-items: center;
`

const Picker = styled.div`
    width: 132px;
    height: 47px;
    padding-left: 8px;
    margin-right: 2px;
    border: 1.500px solid #e3e5ea;
    border-radius: 7px;
    background: #f6f7fa;
    display: flex;
    align-items: center;
`

const ChartValue = styled.div`
    margin-left: ${p => p.$ml}px;
`

const Expand = styled.div`
    position: absolute;
    left: 652px;
    top: 12px;
    width: 68px;
    height: 68px;
    border-radius: 50%;
    background: rgba(240, 110, 40, .13);
    display: flex;
    align-items: center;
    justify-content: center;
`

const Axis = styled.div`
    height: 60px;
    padding: 4px 55px 0 12px;
    display: flex;
    align-items: center;

    > :nth-child(2) {
        margin-left: 59px;
    }

    > :nth-child(3) {
        margin-left: 54px;
    }

    > :nth-child(4) {
        margin-left: auto;
    }
`

const DepthWrap = styled.aside`
    width: 346px;
    border-left: 1.500px solid #d5d5d5;
    display: flex;
    flex-direction: column;
`

const DepthTabs = styled.div`
    height: 60px;
    margin: 6px 0 0 6px;
    display: grid;
    grid-template-columns: repeat(3, 111px);
`

const DepthTab = styled.div`
    padding-top: 4px;
    border-radius: 9px;
    background: ${p => p.$active ? '#fdece5' : 'none'};
    display: flex;
    align-items: center;
    justify-content: center;
`

const Segment = styled.div`
    width: 327px;
    height: 60px;
    margin: 6px 0 0 9px;
    border-radius: 9px;
    background: #f6f7fa;
    display: flex;
`

const SegmentItem = styled.div`
    width: ${p => p.$active ? 163 : 164}px;
    padding-top: 3px;
    border: ${p => p.$active ? '2px solid #dedede' : '0'};
    border-radius: 9px;
    background: ${p => p.$active ? '#fff' : 'none'};
    display: flex;
    align-items: center;
    justify-content: center;
`

const DepthLink = styled.div`
    height: 60px;
    padding-top: 3px;
    display: flex;
    align-items: center;
    justify-content: center;
`

const AskList = styled.div`
    height: 417px;
    overflow: hidden;
    display: flex;
    flex-direction: column;
    justify-content: flex-end;
`

const AskRow = styled.div`
    flex: none;
    height: 48px;
    padding-left: 7px;
    display: grid;
    grid-template-columns: 57px 132px 117px 22px;
    align-items: center;
`

const AskPrice = styled.div`
    display: flex;
    justify-content: flex-end;
`

const AskAmount = styled.div`
    position: relative;
    display: flex;
    justify-content: flex-end;
`

const AskBar = styled.span`
    position: absolute;
    right: -1px;
    top: 4px;
    width: ${p => p.$w}px;
    height: 36px;
    background: #c2e6c2;

    & + * {
        position: relative;
    }
`

const AskDot = styled.span`
    width: 13px;
    height: 13px;
    border-radius: 50%;
    background: ${p => p.$color};
    margin: -5px 0 0 7px;
`

const GreenBar = styled.div`
    height: 5px;
    margin: 9px 6px 0 6px;
    background: #61b34d;
`

const StatList = styled.div`
    padding: 18px 12px 0 13px;
`

const StatRow = styled.div`
    height: 54px;
    display: flex;
    align-items: center;
    justify-content: space-between;
`

const DealList = styled.div`
    margin-top: auto;
    height: 209px;
    padding-top: 2px;
    border-top: 1.500px solid #e6e6e6;
`

const DealTitle = styled.div`
    height: 58px;
    padding-left: 102px;
    display: flex;
    align-items: center;
    gap: 9px;
`

const DealRow = styled.div`
    height: 51px;
    padding-left: 6px;
    display: grid;
    grid-template-columns: 90px 142px 101px;
    align-items: center;
`

const DealAmount = styled.div`
    display: flex;
    justify-content: flex-end;
`

const OrderStrip = styled.div`
    height: 34px;
    overflow: hidden;
    display: flex;
`

const OrderHalf = styled.div`
    width: 540px;
    height: 62px;
    padding: 0 8px 0 12px;
    border-right: 1.500px solid #d9d9d9;
    display: flex;
    align-items: center;
    justify-content: space-between;

    &:last-child {
        border: 0;
        padding-right: 5px;
    }
`

const Bottom = styled.footer`
    height: 150px;
    padding-left: 27px;
    border-top: 2px solid #d0d0d0;
    background: #f6f7fa;
    display: flex;
`

const Index = styled.div`
    width: 248px;
    padding: 8px 25px 0 0;
    display: flex;
    flex-direction: column;
    align-items: center;

    > :nth-child(2) {
        margin-top: 11px;
    }
`

const IndexRow = styled.div`
    display: flex;
    align-items: center;
    gap: 46px;
    margin: 3px 0 0 31px;
`

const NavItem = styled.div`
    width: 201px;
    padding-top: 9px;
    display: flex;
    flex-direction: column;
    align-items: center;
    gap: 16px;
`

const HomeArea = styled.div`
    flex: 1;
    background: #f6f7fa;
    display: flex;
    justify-content: center;
`

const HomePill = styled.span`
    width: 360px;
    height: 12px;
    border-radius: 6px;
    background: #7b7c7e;
`

export default App
